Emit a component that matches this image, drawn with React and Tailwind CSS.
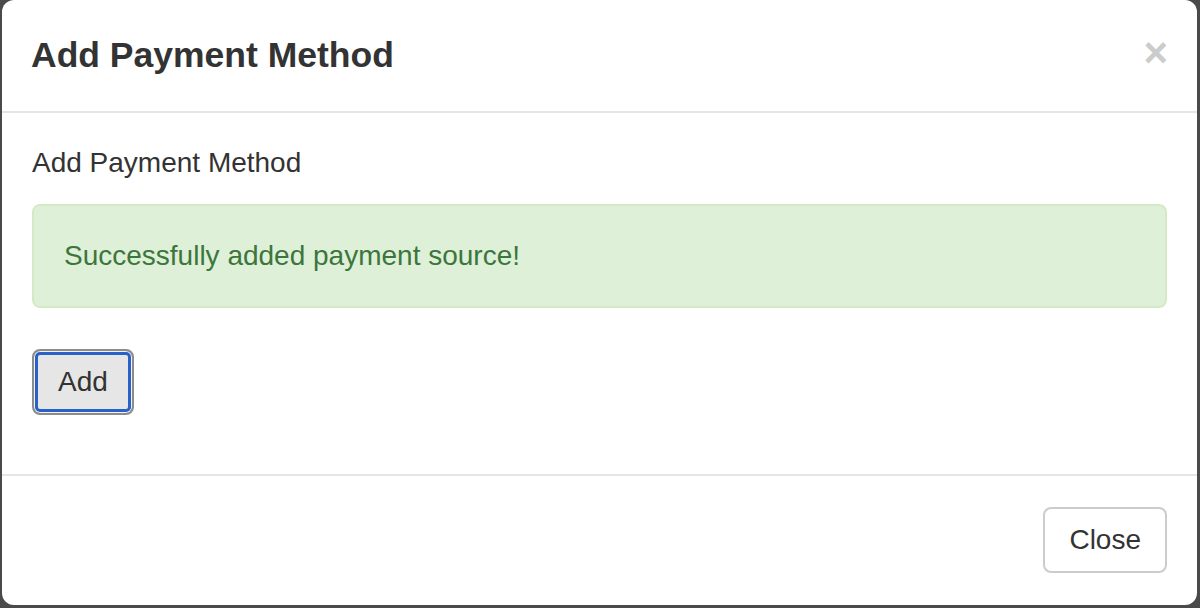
export default function App() {
  return (
    <div
      className="w-[1200px] h-[608px] bg-[#4a4a4a] pl-[2px] pr-[3px] pb-[3px] overflow-hidden"
      style={{ fontFamily: '"Liberation Sans", Arial, sans-serif' }}
    >
      <div className="w-full h-full bg-white rounded-[12px] flex flex-col text-[#333]">
        {/* Header */}
        <div className="h-[113px] border-b-2 border-[#e5e5e5] pl-[29px] pr-[30px] pt-[30px] flex justify-between items-start">
          <h4 className="text-[35.5px] leading-[51px] font-bold m-0">Add Payment Method</h4>
          <button className="text-[42px] leading-[42px] font-bold text-[#cccccc] mt-[2px] -mr-[1px]">×</button>
        </div>
        {/* Body */}
        <div className="px-[30px] pt-[30px] pb-[59px] border-b-2 border-[#e5e5e5]">
          <div className="text-[28px] leading-[40px] mb-[21px]">Add Payment Method</div>
          <div className="bg-[#dff0d8] border-2 border-[#d6e9c6] rounded-[8px] text-[#3c763d] px-[30px] py-[30px] text-[28px] leading-[40px]">
            Successfully added payment source!
          </div>
          <div className="mt-[41px]">
            <button className="h-[66px] px-[24px] text-[28px] leading-[38px] text-[#333] bg-[#e6e6e6] border-2 border-[#8c8c8c] rounded-[8px] shadow-[inset_0_0_0_1px_#f2f2f2,inset_0_0_0_4px_#2862c9]">
              Add
            </button>
          </div>
        </div>
        {/* Footer */}
        <div className="flex-1 flex justify-end items-start px-[30px] pt-[31px]">
          <button className="h-[66px] px-[24px] text-[28px] leading-[38px] text-[#333] bg-white border-2 border-[#cccccc] rounded-[8px]">
            Close
          </button>
        </div>
      </div>
    </div>
  );
}
